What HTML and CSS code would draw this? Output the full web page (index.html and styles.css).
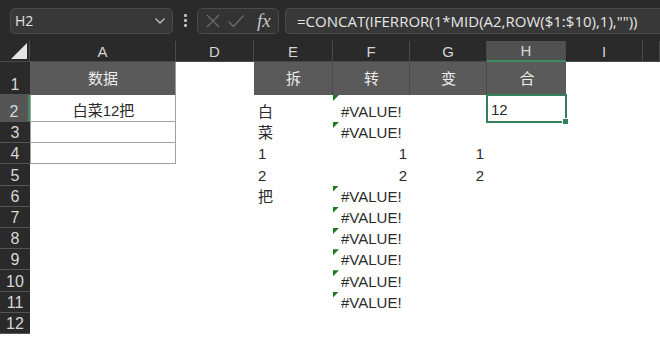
FILE: index.html
```html
<!DOCTYPE html>
<html>
<head>
<meta charset="utf-8">
<link rel="stylesheet" href="styles.css">
</head>
<body>
<div class="app">
  <div class="topbar">
    <div class="namebox">
      <span class="name">H2</span>
      <svg class="chev" width="12" height="8" viewBox="0 0 12 8"><path d="M1.5 1.5 L6 6 L10.5 1.5" fill="none" stroke="#bdbdbd" stroke-width="1.4"/></svg>
    </div>
    <div class="dots"><i></i><i></i><i></i></div>
    <div class="fxbox">
      <svg width="16" height="16" viewBox="0 0 16 16"><path d="M2 2 L14 14 M14 2 L2 14" stroke="#6b6b6b" stroke-width="1.3" fill="none"/></svg>
      <svg width="18" height="16" viewBox="0 0 18 16"><path d="M1.5 8.5 L6.5 13.5 L16.5 2.5" stroke="#6b6b6b" stroke-width="1.3" fill="none"/></svg>
      <span class="fx">fx</span>
    </div>
    <div class="formula">=CONCAT(IFERROR(1*MID(A2,ROW($1:$10),1),""))</div>
  </div>
  <div class="sheet">
    <div class="corner"><svg width="18" height="18" viewBox="0 0 18 18"><path d="M1 17 L17 17 L17 1 Z" fill="#e6e6e6"/></svg></div>
    <div class="ch">A</div><div class="ch">D</div><div class="ch">E</div><div class="ch">F</div><div class="ch">G</div><div class="ch ch-sel">H</div><div class="ch">I</div><div class="ch"></div>

    <div class="rh r1">1</div>
    <div class="c fill ctr a1">数据</div><div class="c"></div><div class="c fill ctr sep">拆</div><div class="c fill ctr sep">转</div><div class="c fill ctr sep">变</div><div class="c fill ctr">合</div><div class="c"></div><div class="c"></div>

    <div class="rh rh-sel">2</div>
    <div class="c ctr boxed">白菜12把</div><div class="c"></div><div class="c">白</div><div class="c err">#VALUE!</div><div class="c"></div><div class="c sel">12</div><div class="c"></div><div class="c"></div>

    <div class="rh">3</div>
    <div class="c boxed"></div><div class="c"></div><div class="c">菜</div><div class="c err">#VALUE!</div><div class="c"></div><div class="c"></div><div class="c"></div><div class="c"></div>

    <div class="rh">4</div>
    <div class="c boxed"></div><div class="c"></div><div class="c">1</div><div class="c num">1</div><div class="c num">1</div><div class="c"></div><div class="c"></div><div class="c"></div>

    <div class="rh">5</div>
    <div class="c"></div><div class="c"></div><div class="c">2</div><div class="c num">2</div><div class="c num">2</div><div class="c"></div><div class="c"></div><div class="c"></div>

    <div class="rh">6</div>
    <div class="c"></div><div class="c"></div><div class="c">把</div><div class="c err">#VALUE!</div><div class="c"></div><div class="c"></div><div class="c"></div><div class="c"></div>

    <div class="rh">7</div>
    <div class="c"></div><div class="c"></div><div class="c"></div><div class="c err">#VALUE!</div><div class="c"></div><div class="c"></div><div class="c"></div><div class="c"></div>

    <div class="rh">8</div>
    <div class="c"></div><div class="c"></div><div class="c"></div><div class="c err">#VALUE!</div><div class="c"></div><div class="c"></div><div class="c"></div><div class="c"></div>

    <div class="rh">9</div>
    <div class="c"></div><div class="c"></div><div class="c"></div><div class="c err">#VALUE!</div><div class="c"></div><div class="c"></div><div class="c"></div><div class="c"></div>

    <div class="rh">10</div>
    <div class="c"></div><div class="c"></div><div class="c"></div><div class="c err">#VALUE!</div><div class="c"></div><div class="c"></div><div class="c"></div><div class="c"></div>

    <div class="rh">11</div>
    <div class="c"></div><div class="c"></div><div class="c"></div><div class="c err">#VALUE!</div><div class="c"></div><div class="c"></div><div class="c"></div><div class="c"></div>

    <div class="rh">12</div>
    <div class="c"></div><div class="c"></div><div class="c"></div><div class="c"></div><div class="c"></div><div class="c"></div><div class="c"></div><div class="c"></div>
  </div>
</div>
</body>
</html>
```
FILE: styles.css
```css
* { box-sizing: border-box; }
html, body { margin: 0; padding: 0; background: #ffffff; }
body { width: 660px; height: 337px; overflow: hidden; font-family: "Liberation Sans", "Noto Sans CJK SC", sans-serif; }

.app { display: flex; flex-direction: column; }

.topbar {
  height: 41px;
  background: #2a2a2a;
  display: flex;
  align-items: center;
  padding-left: 10px;
}
.namebox {
  width: 163px;
  height: 26px;
  background: #383838;
  border: 1px solid #4c4c4c;
  border-radius: 5px;
  display: flex;
  align-items: center;
  justify-content: space-between;
  padding: 0 6px 0 4px;
}
.name { color: #e4e4e4; font-family: "Open Sans", "Liberation Sans", sans-serif; font-size: 14px; }
.dots { width: 24px; display: flex; flex-direction: column; align-items: center; gap: 2px; }
.dots i { display: block; width: 3px; height: 3px; background: #bdbdbd; border-radius: 1px; }
.fxbox {
  width: 82px;
  height: 26px;
  background: #333333;
  border: 1px solid #4a4a4a;
  border-radius: 5px;
  display: flex;
  align-items: center;
  gap: 6px;
  padding-left: 7px;
}
.fx {
  margin-left: 6px;
  color: #c4c4c4;
  font-family: "Liberation Serif", serif;
  font-style: italic;
  font-size: 19px;
  line-height: 1;
}
.formula {
  margin-left: 6px;
  flex: 1;
  height: 26px;
  background: #383838;
  border: 1px solid #4c4c4c;
  border-right: none;
  border-radius: 5px 0 0 5px;
  color: #e6e6e6;
  font-family: "Open Sans", "Liberation Sans", sans-serif;
  font-size: 15px;
  line-height: 24px;
  padding-left: 11px;
  white-space: nowrap;
  overflow: hidden;
}

.sheet {
  display: grid;
  grid-template-columns: 30px 146px 78px 79px 77px 77px 79px 77px 17px;
  grid-template-rows: 21px 33px 27px repeat(10, 21.2px);
  background: #ffffff;
}
.corner {
  background: #2a2a2a;
  border-right: 1px solid #4a4a4a;
  border-bottom: 1px solid #4a4a4a;
  display: flex;
  align-items: flex-end;
  justify-content: flex-end;
  padding: 0 1px 1px 0;
}
.ch {
  background: #2a2a2a;
  color: #d4d4d4;
  font-size: 15px;
  display: flex;
  align-items: center;
  justify-content: center;
  border-right: 1px solid #4a4a4a;
  border-bottom: 1px solid #4a4a4a;
}
.ch-sel { background: #515151; border-bottom: 2px solid #3f8d5e; }
.rh {
  background: #2a2a2a;
  color: #d8d8d8;
  font-size: 16px;
  display: flex;
  align-items: flex-end;
  justify-content: center;
  padding-bottom: 0;
  line-height: 18px;
  border-bottom: 1px solid #555555;
}
.rh-sel { background: #555555; border-right: 2px solid #3f8d5e; }

.c {
  position: relative;
  color: #2b2b2b;
  font-size: 15px;
  line-height: 19px;
  display: flex;
  align-items: flex-end;
  padding: 0 3px 1px 4px;
  white-space: nowrap;
}
.ctr { justify-content: center; }
.num { justify-content: flex-end; }
.fill { background: #5a5a5a; color: #ececec; align-items: center; padding-bottom: 0; }
.a1 { border-right: 1px solid #9a9a9a; }
.sep { border-right: 1px solid #4a4a4a; }
.boxed { border: 1px solid #a0a0a0; border-top: none; }
.sel {
  outline: 2px solid #33805a;
  outline-offset: -1px;
  padding-bottom: 3px;
}
.sel::after {
  content: "";
  position: absolute;
  right: -3px;
  bottom: -3px;
  width: 5px;
  height: 5px;
  background: #33805a;
  border: 1px solid #ffffff;
}
.err::before {
  content: "";
  position: absolute;
  left: 0;
  top: 0;
  width: 6px;
  height: 6px;
  background: #1f7a1f;
  clip-path: polygon(0 0, 100% 0, 0 100%);
}
.err { padding-left: 8px; }
```
